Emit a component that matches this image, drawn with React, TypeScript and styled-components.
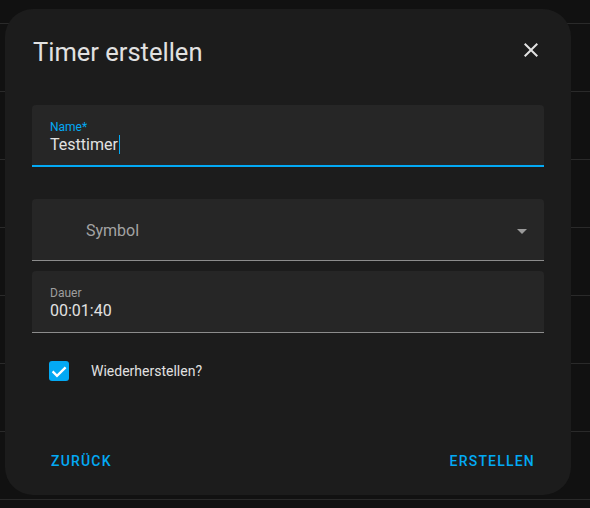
import { FC } from 'react';
import { createGlobalStyle, styled } from 'styled-components';

const GlobalStyle = createGlobalStyle`
    html, body {
        margin: 0;
        padding: 0;
        background: #111111;
        font-family: Roboto, 'Noto Sans', 'Liberation Sans', sans-serif;
        -webkit-font-smoothing: antialiased;
    }
    body {
        height: 508px;
        overflow: hidden;
    }
`;

const ListBackground = styled.div`
    margin-top: -44px;
    height: 552px;
    overflow: hidden;
    display: flex;
    flex-direction: column;
`;

const ListRow = styled.div`
    flex: none;
    height: 68px;
    box-sizing: border-box;
    border-bottom: 1px solid #2a2a2a;
`;

const Dialog = styled.div`
    position: fixed;
    left: 5px;
    top: 9px;
    width: 566px;
    height: 486px;
    box-sizing: border-box;
    border-radius: 28px;
    background: #1c1c1c;
    display: flex;
    flex-direction: column;
    padding: 0 27px 16px 27px;
`;

const Header = styled.div`
    display: flex;
    align-items: flex-start;
    justify-content: space-between;
    padding-top: 17px;
    margin-right: -11px;
`;

const Title = styled.h2`
    margin: 9.5px 0 0 1px;
    font-size: 25.5px;
    line-height: 32px;
    font-weight: 400;
    color: #e1e1e1;
`;

const CloseButton = styled.button`
    width: 48px;
    height: 48px;
    border: none;
    background: transparent;
    padding: 0;
    display: flex;
    align-items: center;
    justify-content: center;
    color: #e1e1e1;
    cursor: pointer;
`;

const Content = styled.div`
    display: flex;
    flex-direction: column;
    margin-top: 31px;
`;

const Field = styled.div<{ $focused?: boolean; $gap?: number }>`
    height: 62px;
    box-sizing: border-box;
    background: #262626;
    border-radius: 4px 4px 0 0;
    border-bottom: ${p => (p.$focused ? '2px solid #03a9f4' : '1px solid #8c8c8c')};
    padding: 13.5px 16px 0 18px;
    margin-bottom: ${p => p.$gap ?? 0}px;
`;

const FieldLabel = styled.div<{ $focused?: boolean }>`
    font-size: 12px;
    line-height: 16px;
    color: ${p => (p.$focused ? '#03a9f4' : '#9e9e9e')};
`;

const FieldValue = styled.div`
    font-size: 16px;
    line-height: 20px;
    color: #e1e1e1;
    display: flex;
    align-items: center;
`;

const Caret = styled.span`
    display: inline-block;
    width: 1px;
    height: 19px;
    margin-left: 1px;
    background: #03a9f4;
`;

const SelectField = styled(Field)`
    display: flex;
    align-items: center;
    justify-content: space-between;
    padding: 3px 17px 0 54px;
`;

const SelectPlaceholder = styled.span`
    font-size: 16px;
    line-height: 20px;
    color: #a3a3a3;
`;

const CheckRow = styled.label`
    display: flex;
    align-items: center;
    height: 40px;
    margin-top: 17.5px;
    padding-left: 17px;
    gap: 22px;
    font-size: 14px;
    line-height: 20px;
    color: #e1e1e1;
`;

const CheckBox = styled.span`
    width: 20px;
    height: 20px;
    border-radius: 3px;
    background: #03a9f4;
    display: flex;
    align-items: center;
    justify-content: center;
`;

const Footer = styled.div`
    margin-top: auto;
    display: flex;
    justify-content: space-between;
    padding-left: 11px;
    margin-right: 1px;
`;

const TextButton = styled.button`
    height: 36px;
    padding: 0 8px;
    border: none;
    background: transparent;
    font-family: inherit;
    font-size: 14px;
    font-weight: 500;
    letter-spacing: 1.2px;
    text-transform: uppercase;
    line-height: 36px;
    color: #03a9f4;
    cursor: pointer;
`;

const CloseIcon: FC = () => (
    <svg width="24" height="24" viewBox="0 0 24 24">
        <path
            fill="currentColor"
            d="M19,6.41L17.59,5L12,10.59L6.41,5L5,6.41L10.59,12L5,17.59L6.41,19L12,13.41L17.59,19L19,17.59L13.41,12L19,6.41Z"
        />
    </svg>
);

const App: FC = () => {
    const rows = Array.from({ length: 9 });

    return (
        <>
            <GlobalStyle />
            <ListBackground>
                {rows.map((_, i) => (
                    <ListRow key={i} />
                ))}
            </ListBackground>
            <Dialog role="dialog">
                <Header>
                    <Title>Timer erstellen</Title>
                    <CloseButton aria-label="Schließen">
                        <CloseIcon />
                    </CloseButton>
                </Header>
                <Content>
                    <Field $focused $gap={32}>
                        <FieldLabel $focused>Name*</FieldLabel>
                        <FieldValue>
                            Testtimer
                            <Caret />
                        </FieldValue>
                    </Field>
                    <SelectField $gap={10}>
                        <SelectPlaceholder>Symbol</SelectPlaceholder>
                        <svg width="10" height="5" viewBox="7 10 10 5">
                            <polygon points="7 10 12 15 17 10" fill="#9a9a9a" />
                        </svg>
                    </SelectField>
                    <Field>
                        <FieldLabel>Dauer</FieldLabel>
                        <FieldValue>00:01:40</FieldValue>
                    </Field>
                    <CheckRow>
                        <CheckBox>
                            <svg width="20" height="20" viewBox="0 0 20 20">
                                <path
                                    d="M3.6 10.4 L8 14.8 L16.6 6.4"
                                    fill="none"
                                    stroke="#ffffff"
                                    strokeWidth="2.3"
                                />
                            </svg>
                        </CheckBox>
                        Wiederherstellen?
                    </CheckRow>
                </Content>
                <Footer>
                    <TextButton>Zurück</TextButton>
                    <TextButton>Erstellen</TextButton>
                </Footer>
            </Dialog>
        </>
    );
};

export default App;
